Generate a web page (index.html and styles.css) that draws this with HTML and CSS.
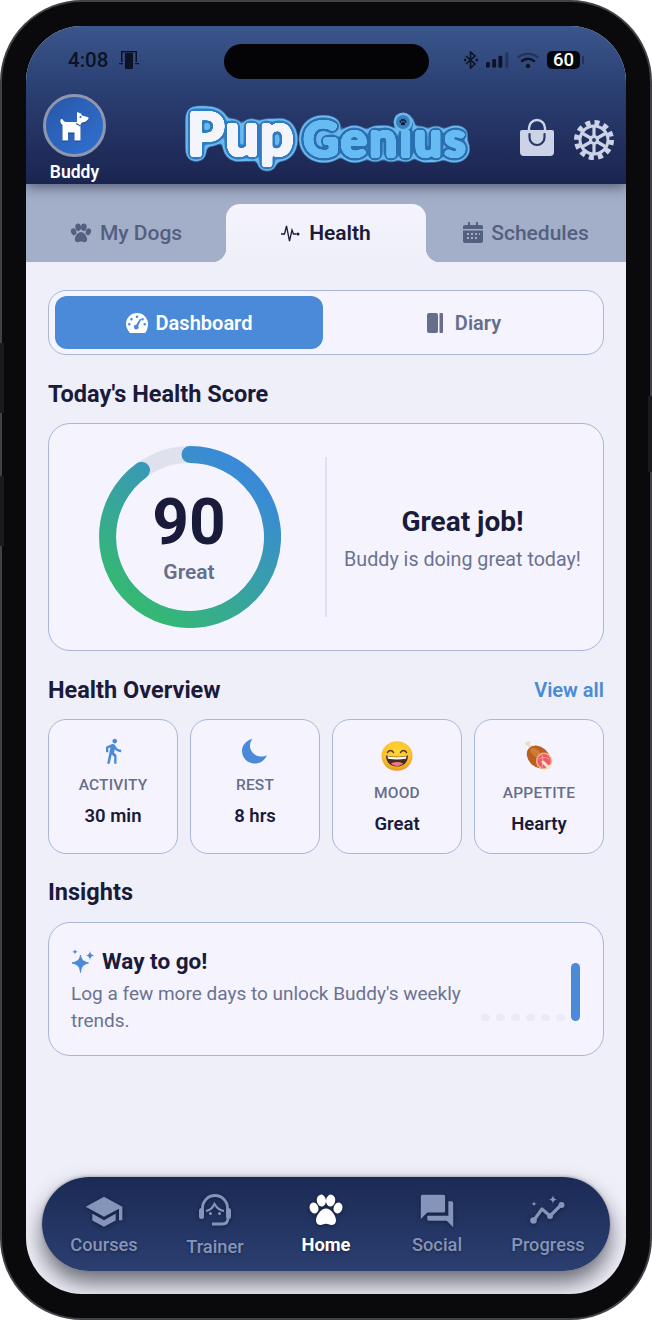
FILE: index.html
```html
<!DOCTYPE html>
<html lang="en">
<head>
  <meta charset="UTF-8" />
  <meta name="viewport" content="width=device-width, initial-scale=1.0" />
  <title>Pup Genius - Health</title>
  <link rel="stylesheet" href="styles.css">
</head>
<body>
  <svg class="defs" width="0" height="0">
    <defs>
      <symbol id="paw" viewBox="0 0 36 32">
        <ellipse cx="6" cy="14" rx="4.400" ry="5.600" transform="rotate(-18 6 14)" />
        <ellipse cx="13.400" cy="6.600" rx="4.600" ry="6" transform="rotate(-8 13.400 6.600)" />
        <ellipse cx="22.600" cy="6.600" rx="4.600" ry="6" transform="rotate(8 22.600 6.600)" />
        <ellipse cx="30" cy="14" rx="4.400" ry="5.600" transform="rotate(18 30 14)" />
        <path d="M18 14.500c-4.500 0-10 6.500-10 12 0 3 2.200 4.500 4.600 4.500 2.200 0 3.400-1.200 5.400-1.200s3.200 1.200 5.400 1.200c2.400 0 4.600-1.500 4.600-4.500 0-5.500-5.500-12-10-12z" />
      </symbol>
      <linearGradient id="ring" gradientUnits="userSpaceOnUse" x1="165" y1="15" x2="45" y2="165">
        <stop offset="0" stop-color="#3a84e4" />
        <stop offset="1" stop-color="#35b873" />
      </linearGradient>
      <radialGradient id="face" cx="50%" cy="35%" r="65%">
        <stop offset="0" stop-color="#fdd835" />
        <stop offset="0.7" stop-color="#fbc02d" />
        <stop offset="1" stop-color="#e8951c" />
      </radialGradient>
      <filter id="logo-pup" x="-20%" y="-30%" width="140%" height="160%" color-interpolation-filters="sRGB">
        <feGaussianBlur in="SourceAlpha" stdDeviation="1.200" />
        <feComponentTransfer result="a1"><feFuncA type="linear" slope="10" intercept="-1" /></feComponentTransfer>
        <feGaussianBlur in="SourceAlpha" stdDeviation="2.500" />
        <feComponentTransfer result="a2"><feFuncA type="linear" slope="20" intercept="-1" /></feComponentTransfer>
        <feGaussianBlur in="SourceAlpha" stdDeviation="4" />
        <feComponentTransfer result="a3"><feFuncA type="linear" slope="20" intercept="-1" /></feComponentTransfer>
        <feFlood flood-color="#f4f4fd" /><feComposite in2="a1" operator="in" result="c1" />
        <feFlood flood-color="#2f7cc2" /><feComposite in2="a2" operator="in" result="c2" />
        <feFlood flood-color="#69b9ee" /><feComposite in2="a3" operator="in" result="c3" />
        <feMerge><feMergeNode in="c3" /><feMergeNode in="c2" /><feMergeNode in="c1" /></feMerge>
      </filter>
      <filter id="logo-genius" x="-20%" y="-30%" width="140%" height="160%" color-interpolation-filters="sRGB">
        <feGaussianBlur in="SourceAlpha" stdDeviation="1.100" />
        <feComponentTransfer result="a1"><feFuncA type="linear" slope="10" intercept="-1" /></feComponentTransfer>
        <feGaussianBlur in="SourceAlpha" stdDeviation="2.500" />
        <feComponentTransfer result="a2"><feFuncA type="linear" slope="20" intercept="-1" /></feComponentTransfer>
        <feGaussianBlur in="SourceAlpha" stdDeviation="4" />
        <feComponentTransfer result="a3"><feFuncA type="linear" slope="20" intercept="-1" /></feComponentTransfer>
        <feFlood flood-color="#66bcf2" /><feComposite in2="a1" operator="in" result="c1" />
        <feFlood flood-color="#2a6fb2" /><feComposite in2="a2" operator="in" result="c2" />
        <feFlood flood-color="#69b9ee" /><feComposite in2="a3" operator="in" result="c3" />
        <feMerge><feMergeNode in="c3" /><feMergeNode in="c2" /><feMergeNode in="c1" /></feMerge>
      </filter>
    </defs>
  </svg>

  <div class="phone">
    <span class="side-btn side-btn-a"></span>
    <span class="side-btn side-btn-b"></span>
    <span class="side-btn side-btn-c"></span>
    <div class="screen">
      <span class="notch"></span>

      <header class="top">
        <div class="status">
          <span class="time">4:08</span>
          <svg class="mirror" width="20" height="20" viewBox="0 0 20 20">
            <path d="M2 1h16v11h-1.500V2.500h-13V12H2z" />
            <rect x="6" y="3" width="8" height="16" rx="1.200" />
            <path d="M0 13h4v1.200H0zM16 13h4v1.200h-4z" />
          </svg>
          <span class="status-right">
            <svg width="14" height="18" viewBox="0 0 14 18" fill="none" stroke="#0d1226" stroke-width="1.600">
              <path d="M2 5l9 8-4.500 4V1l4.500 4-9 8" />
              <circle cx="1" cy="9" r=".6" />
              <circle cx="13" cy="9" r=".6" />
            </svg>
            <svg width="23" height="16" viewBox="0 0 24 16">
              <rect x="0" y="10" width="4" height="6" rx="1.500" fill="#0d1226" />
              <rect x="6.500" y="7" width="4" height="9" rx="1.500" fill="#0d1226" />
              <rect x="13" y="3.500" width="4" height="12.500" rx="1.500" fill="#0d1226" />
              <rect x="20" y="0" width="3.500" height="16" rx="1.500" fill="#0d1226" opacity=".35" />
            </svg>
            <svg width="22" height="16" viewBox="0 0 22 16" fill="none" stroke="#0d1226" stroke-linecap="round">
              <path d="M1.500 5.200C7 .6 15 .6 20.500 5.200" stroke-width="2" opacity=".45" />
              <path d="M5 9C8.500 6 13.500 6 17 9" stroke-width="2.400" />
              <circle cx="11" cy="14" r="2.200" fill="#0d1226" stroke="none" />
            </svg>
            <span class="battery"><b>60</b></span>
          </span>
        </div>

        <div class="app-row">
          <div class="avatar-col">
            <div class="avatar">
              <svg class="dog" width="30" height="30" viewBox="0 0 30 30" fill="#fff">
                <path d="M17 1l4 1.500 1 2 5.500 1.500c1.200.4 1.500 1.500.5 2.500-1.500 1.800-3.500 3-6 3l-1.500 2v16h-6v-8H8v8H2.500V14C1 13 0 11.500.5 9c.2-1.200 2-1.200 2.500 0 .6 1.500 2 2 4 2h10z" />
                <circle cx="20.500" cy="6" r="1" fill="#2a5fb5" />
                <path d="M16 12.500l4.500 2.500" stroke="#2a5fb5" stroke-width="1.200" />
              </svg>
            </div>
            <span class="dog-name">Buddy</span>
          </div>

          <svg class="logo" width="292" height="84" viewBox="0 -6 292 84">
            <text class="logo-text logo-pup" x="4" y="56" filter="url(#logo-pup)">Pup</text>
            <text class="logo-text logo-genius" x="120" y="57" filter="url(#logo-genius)">Genius</text>
            <circle cx="220" cy="22" r="9.500" fill="#69b9ee" />
            <circle cx="220" cy="22" r="7" fill="#3b7fbb" />
            <use href="#paw" x="216" y="18.500" width="8" height="7" fill="#0f1c3c" />
          </svg>

          <svg class="bag" width="36" height="40" viewBox="0 0 36 40">
            <path d="M10 14V10a8 8 0 0 1 16 0v4" fill="none" stroke="#cdd3e6" stroke-width="2.400" />
            <path d="M3 12h30a2 2 0 0 1 2 2v20a4 4 0 0 1-4 4H5a4 4 0 0 1-4-4V14a2 2 0 0 1 2-2z" fill="#cdd3e6" />
            <path d="M10.500 16v3.500a7.500 7.500 0 0 0 15 0V16" fill="none" stroke="#2a3a68" stroke-width="2.200" stroke-linecap="round" />
          </svg>

          <svg class="gear" width="40" height="40" viewBox="-20 -20 40 40" fill="none" stroke="#cdd3e6">
            <circle r="17.500" stroke-width="5" stroke-dasharray="5 4.160" />
            <circle r="14" stroke-width="3" />
            <path d="M0-13V13M-11.300-6.500L11.300 6.500M-11.300 6.500L11.300-6.500" stroke-width="3.200" />
            <circle r="3.500" stroke-width="3.200" fill="#26396c" />
          </svg>
        </div>
      </header>

      <nav class="tabs">
        <div class="tab">
          <svg width="22" height="20"><use href="#paw" width="22" height="20" /></svg>
          My Dogs
        </div>
        <div class="tab tab-active">
          <svg width="20" height="20" viewBox="0 0 20 20" fill="none" stroke="#1a1a3a" stroke-width="1.300">
            <path d="M0 11h3.500l2-8 3 15 2.500-11 1.500 4h3" />
            <circle cx="17" cy="11" r="1.500" fill="#1a1a3a" stroke="none" />
          </svg>
          Health
        </div>
        <div class="tab">
          <svg width="20" height="21" viewBox="0 0 20 21">
            <path d="M2 3h3V0h2v3h6V0h2v3h3a2 2 0 0 1 2 2v2H0V5a2 2 0 0 1 2-2zM0 8.500h20V19a2 2 0 0 1-2 2H2a2 2 0 0 1-2-2z" />
            <path d="M4 11h2v2H4zM8 11h2v2H8zM12 11h2v2h-2zM16 11h1v2h-1zM4 15h2v2H4zM8 15h2v2H8zM12 15h2v2h-2z" fill="#a3aec8" />
          </svg>
          Schedules
        </div>
      </nav>

      <main class="content">
        <div class="segment">
          <div class="seg-btn seg-active">
            <svg width="22" height="20" viewBox="0 0 22 20">
              <path fill-rule="evenodd" d="M11 0a11 11 0 0 1 11 11c0 3.500-1 6.500-2.500 8.500-.4.400-.8.500-1.200.5H4.700c-.4 0-.8-.1-1.200-.5C2 17.500 0 14.500 0 11A11 11 0 0 1 11 0zm0 2.500a1.300 1.300 0 1 0 0 2.600 1.300 1.300 0 0 0 0-2.600zM5.500 5a1.300 1.300 0 1 0 0 2.600 1.300 1.300 0 0 0 0-2.600zm11 0a1.300 1.300 0 1 0 0 2.600 1.300 1.300 0 0 0 0-2.600zM3.300 10a1.300 1.300 0 1 0 0 2.600 1.300 1.300 0 0 0 0-2.600zm15.400 0a1.300 1.300 0 1 0 0 2.600 1.300 1.300 0 0 0 0-2.600zM14 5.800l-3.800 6a2.300 2.300 0 1 0 2 1.100L15.300 6.500z" />
            </svg>
            Dashboard
          </div>
          <div class="seg-btn">
            <svg width="16" height="20" viewBox="0 0 16 20">
              <rect x="0" y="0" width="11" height="20" rx="2" />
              <rect x="12.500" y="0" width="3.500" height="20" rx="1" />
            </svg>
            Diary
          </div>
        </div>

        <h2 class="sec-title">Today's Health Score</h2>
        <section class="score-card">
          <div class="ring-col">
            <svg class="ring" width="182" height="182" viewBox="0 0 182 182" fill="none" stroke-width="17">
              <circle cx="91" cy="91" r="82.500" stroke="#dfe1ec" />
              <path d="M91 8.500A82.500 82.500 0 1 1 42.500 24.300" stroke="url(#ring)" stroke-linecap="round" />
            </svg>
            <div class="ring-text">
              <span class="score">90</span>
              <span class="score-label">Great</span>
            </div>
          </div>
          <div class="score-msg">
            <h3>Great job!</h3>
            <p>Buddy is doing great today!</p>
          </div>
        </section>

        <div class="sec-row">
          <h2 class="sec-title">Health Overview</h2>
          <a class="view-all">View all</a>
        </div>
        <section class="stats">
          <div class="stat">
            <svg class="stat-icon" width="28" height="28" viewBox="0 0 24 24">
              <path d="M13.500 5.500c1.100 0 2-.9 2-2s-.9-2-2-2-2 .9-2 2 .9 2 2 2zM9.800 8.900L7 23h2.100l1.800-8 2.100 2v6h2v-7.500l-2.100-2 .6-3C14.800 12 16.800 13 19 13v-2c-1.900 0-3.500-1-4.300-2.400l-1-1.600c-.4-.6-1-1-1.700-1-.3 0-.5.1-.8.1L6 8.300V13h2V9.600l1.800-.7" />
            </svg>
            <span class="stat-label">ACTIVITY</span>
            <span class="stat-value">30 min</span>
          </div>
          <div class="stat">
            <svg class="stat-icon" width="26" height="26" viewBox="0 0 26 26">
              <path d="M10.500 1C4.500 2 0 7 0 13c0 7 5.800 12.500 12.800 12.500 5.500 0 10.300-3.500 12-8.300-1.800 1-4 1.500-6.300 1.300C11.500 18 7.500 12 8 7c.2-2.300 1.100-4.500 2.500-6z" />
            </svg>
            <span class="stat-label">REST</span>
            <span class="stat-value">8 hrs</span>
          </div>
          <div class="stat stat-emoji">
            <svg width="32" height="30" viewBox="0 0 32 30">
              <ellipse cx="16" cy="15" rx="15.500" ry="14.700" fill="url(#face)" />
              <path d="M6.500 11.500c1-2.800 5-2.800 6 0M19.500 11.500c1-2.800 5-2.800 6 0" fill="none" stroke="#54371c" stroke-width="1.500" stroke-linecap="round" />
              <path d="M5 14.500c7 1.800 15 1.800 22 0 0 7-4.500 11-11 11s-11-4-11-11z" fill="#4b2b17" />
              <path d="M6.500 15.300c6 1.200 13 1.200 19 0l-.5 2.500c-5.500 1-12.500 1-18 0z" fill="#fff" />
              <path d="M10 22.500c3-2 9-2 12 0-1.500 1.600-3.500 2.400-6 2.400s-4.500-.8-6-2.400z" fill="#f0749a" />
            </svg>
            <span class="stat-label">MOOD</span>
            <span class="stat-value">Great</span>
          </div>
          <div class="stat stat-emoji">
            <svg width="30" height="30" viewBox="0 0 30 30">
              <path d="M9 8L4 3.500" stroke="#f0dcc4" stroke-width="3" stroke-linecap="round" />
              <circle cx="3" cy="2.500" r="2" fill="#f0dcc4" />
              <circle cx="5" cy="1.800" r="1.700" fill="#f0dcc4" />
              <ellipse cx="14.500" cy="16" rx="13" ry="10" transform="rotate(42 14.500 16)" fill="#b8601f" />
              <ellipse cx="12" cy="12" rx="7" ry="3.500" transform="rotate(40 12 12)" fill="#d07c36" />
              <ellipse cx="20" cy="20" rx="8" ry="8.500" fill="#f3b283" />
              <ellipse cx="20" cy="20" rx="6.600" ry="7" fill="#ec5a68" />
              <path d="M15 18c3-2 7-2 10 0M18 14c1 4 1 9 0 12" stroke="#f8a0a0" stroke-width="1" fill="none" />
              <path d="M19 21l5 5" stroke="#f2e3cf" stroke-width="3" stroke-linecap="round" />
              <circle cx="25.500" cy="25.500" r="1.800" fill="#f2e3cf" />
              <circle cx="24" cy="27" r="1.800" fill="#f2e3cf" />
            </svg>
            <span class="stat-label">APPETITE</span>
            <span class="stat-value">Hearty</span>
          </div>
        </section>

        <h2 class="sec-title sec-insights">Insights</h2>
        <section class="insight">
          <div class="insight-body">
            <div class="insight-head">
              <svg width="24" height="24" viewBox="0 0 24 24" fill="#4a8ad9">
                <path d="M9.500 6c.6 4.500 2.500 6.500 8 8-5.500 1.500-7.400 3.500-8 9.500-.6-6-2.500-8-8.500-9.500 6-1.500 7.900-3.500 8.500-8z" stroke="#4a8ad9" stroke-width="1" stroke-linejoin="round" />
                <path d="M19 2c.4 2.800 1.400 3.800 4.500 4.500C20.400 7.200 19.400 8.200 19 11c-.4-2.800-1.400-3.800-4-4.500 2.600-.7 3.600-1.700 4-4.500z" />
                <path d="M4 0c.2 1.700.8 2.300 2.800 2.800C4.800 3.300 4.200 3.900 4 5.600c-.2-1.700-.8-2.300-2.800-2.800C3.200 2.300 3.800 1.700 4 0z" />
              </svg>
              <h3>Way to go!</h3>
            </div>
            <p>Log a few more days to unlock Buddy's weekly trends.</p>
          </div>
          <div class="mini-chart">
            <span class="dot"></span>
            <span class="dot"></span>
            <span class="dot"></span>
            <span class="dot"></span>
            <span class="dot"></span>
            <span class="dot"></span>
            <span class="bar"></span>
          </div>
        </section>
      </main>

      <footer class="bottom-nav">
        <div class="nav-item">
          <svg width="40" height="32" viewBox="0 2 24 19">
            <path d="M5 13.180v4L12 21l7-3.820v-4L12 17l-7-3.820zM12 3 1 9l11 6 9-4.910V17h2V9L12 3z" />
          </svg>
          <span>Courses</span>
        </div>
        <div class="nav-item nav-trainer">
          <svg width="34" height="32" viewBox="0 0 34 32" fill="none" stroke="#8494ba" stroke-width="2.800">
            <path d="M4.500 16v-3a12.500 12.500 0 0 1 25 0v3" />
            <path d="M8 16c3.500-.5 6.500-3 8.500-7 2 3.500 5 6.500 9.500 7" stroke-width="2.200" />
            <rect x="1" y="13" width="5" height="11" rx="2.500" fill="#8494ba" stroke="none" />
            <rect x="28" y="13" width="5" height="11" rx="2.500" fill="#8494ba" stroke="none" />
            <path d="M30 23c0 4-2 6-6 6H14" />
            <circle cx="12.500" cy="18.500" r="1.500" fill="#8494ba" stroke="none" />
            <circle cx="21.500" cy="18.500" r="1.500" fill="#8494ba" stroke="none" />
          </svg>
          <span>Trainer</span>
        </div>
        <div class="nav-item nav-active">
          <svg width="36" height="32"><use href="#paw" width="36" height="32" /></svg>
          <span>Home</span>
        </div>
        <div class="nav-item">
          <svg width="36" height="36" viewBox="1.500 1.500 21 21">
            <path d="M21 6h-2v9H6v2c0 .55.45 1 1 1h11l4 4V7c0-.55-.45-1-1-1zm-4 6V3c0-.55-.45-1-1-1H3c-.55 0-1 .45-1 1v14l4-4h10c.55 0 1-.45 1-1z" />
          </svg>
          <span>Social</span>
        </div>
        <div class="nav-item">
          <svg width="36" height="32" viewBox="0 0 36 32" fill="#8494ba">
            <path d="M4 25l8-11 8 7 11-11" fill="none" stroke="#8494ba" stroke-width="3.200" stroke-linecap="round" stroke-linejoin="round" />
            <circle cx="3.500" cy="25.500" r="3.300" />
            <circle cx="20" cy="21" r="3" />
            <circle cx="31.500" cy="10" r="3" />
            <path d="M23 0c.4 3 1.200 3.800 4 4.500-2.800.7-3.600 1.500-4 4.500-.4-3-1.200-3.800-4-4.500 2.800-.7 3.600-1.500 4-4.500z" />
            <path d="M4 6c.2 1.800.7 2.300 2.800 2.800C4.700 9.300 4.200 9.800 4 11.600c-.2-1.800-.7-2.300-2.800-2.800C3.300 8.300 3.800 7.800 4 6z" />
          </svg>
          <span>Progress</span>
        </div>
      </footer>
    </div>
  </div>
</body>
</html>
```

FILE: styles.css
```css
* {
  margin: 0;
  padding: 0;
  box-sizing: border-box;
}

html {
  font-family: "Roboto", "Liberation Sans", sans-serif;
}

body {
  width: 652px;
  height: 1320px;
  background-color: #fff;
  overflow: hidden;
}

.defs {
  position: absolute;
}

/* device frame */
.phone {
  position: relative;
  width: 652px;
  height: 1320px;
  padding: 24px;
  background-color: #0a0a0c;
  border: 2px solid #3f4147;
  border-radius: 82px;
}

.side-btn {
  position: absolute;
  width: 4px;
  background-color: #1a1b1f;
}

.side-btn-a {
  left: -2px;
  top: 341px;
  height: 70px;
}

.side-btn-b {
  left: -2px;
  top: 474px;
  height: 70px;
}

.side-btn-c {
  right: -2px;
  top: 394px;
  height: 76px;
}

.screen {
  position: relative;
  display: flex;
  flex-direction: column;
  height: 1268px;
  background-color: #eeeff8;
  border-radius: 56px;
  overflow: hidden;
}

.notch {
  position: absolute;
  left: 198px;
  top: 18px;
  width: 205px;
  height: 35px;
  background-color: #040406;
  border-radius: 18px;
  z-index: 5;
}

/* header */
.top {
  position: relative;
  height: 158px;
  flex-shrink: 0;
  background: linear-gradient(180deg, #3b568c 0%, #2a3f72 40%, #1b2450 100%);
  box-shadow: 0 3px 12px rgba(20, 24, 50, 0.55);
  z-index: 2;
}

.status {
  display: flex;
  align-items: center;
  height: 68px;
  padding: 22px 0 22px 42px;
  color: #0d1226;
}

.time {
  font-size: 20.500px;
  font-weight: 500;
}

.mirror {
  margin-left: 11px;
  fill: #0d1226;
}

.status-right {
  display: flex;
  align-items: center;
  gap: 8px;
  margin-left: auto;
  margin-right: 46px;
}

.battery {
  position: relative;
  display: flex;
  align-items: center;
  justify-content: center;
  width: 33px;
  height: 18px;
  background-color: #05070f;
  border-radius: 5px;
  color: #fff;
  font-size: 18.500px;
}

.battery b {
  font-weight: 500;
}

.battery::after {
  content: "";
  position: absolute;
  right: -4px;
  top: 5px;
  width: 2px;
  height: 8px;
  border-radius: 1px;
  background-color: #0d1226;
  opacity: 0.45;
}

.app-row {
  display: flex;
  align-items: flex-start;
  padding-left: 17px;
}

.avatar-col {
  display: flex;
  flex-direction: column;
  align-items: center;
  width: 63px;
}

.avatar {
  display: flex;
  align-items: center;
  justify-content: center;
  width: 63px;
  height: 63px;
  border: 3px solid #8e97ad;
  border-radius: 50%;
  background: linear-gradient(135deg, #2858aa, #3070d0);
}

.dog {
  filter: drop-shadow(0 1px 0 rgba(15, 40, 90, 0.6));
}

.dog-name {
  margin-top: 5px;
  font-size: 17.500px;
  font-weight: 600;
  line-height: 20px;
  color: #fff;
  white-space: nowrap;
}

.logo {
  margin-left: 77px;
  flex-shrink: 0;
}

.logo-text {
  font-family: "Lato", sans-serif;
  font-weight: 900;
}

.logo-pup {
  font-size: 60px;
  letter-spacing: 0.5px;
  fill: #f4f4fd;
}

.logo-genius {
  font-size: 49.500px;
  letter-spacing: 2px;
  fill: #66bcf2;
}

.bag {
  margin-left: 44px;
  margin-top: 24px;
  flex-shrink: 0;
}

.gear {
  margin-left: 19px;
  margin-top: 26px;
  flex-shrink: 0;
}

/* tabs */
.tabs {
  display: flex;
  height: 78px;
  flex-shrink: 0;
  padding-top: 20px;
  background-color: #a3aec8;
}

.tab {
  position: relative;
  flex: 1;
  display: flex;
  align-items: center;
  justify-content: center;
  gap: 8px;
  height: 58px;
  padding-bottom: 1px;
  font-size: 21px;
  font-weight: 500;
  color: #555f80;
  fill: #555f80;
}

.tab-active {
  background: linear-gradient(180deg, #f5f4fe, #eeeff8);
  border-radius: 14px 14px 0 0;
  font-weight: 600;
  color: #1a1a3a;
}

.tab-active::before,
.tab-active::after {
  content: "";
  position: absolute;
  bottom: 0;
  width: 14px;
  height: 14px;
}

.tab-active::before {
  left: -14px;
  background: radial-gradient(circle at 0 0, transparent 14px, #eeeff8 14.500px);
}

.tab-active::after {
  right: -14px;
  background: radial-gradient(circle at 100% 0, transparent 14px, #eeeff8 14.500px);
}

/* main */
.content {
  flex: 1;
  padding: 28px 22px 0;
}

.segment {
  display: flex;
  height: 65px;
  padding: 5px 6px;
  background-color: #f5f4fe;
  border: 1px solid #a9b6d8;
  border-radius: 18px;
}

.seg-btn {
  display: flex;
  align-items: center;
  justify-content: center;
  gap: 12px;
  flex: 1;
  padding-left: 8px;
  font-size: 20px;
  font-weight: 600;
  color: #666e8c;
  fill: #666e8c;
  border-radius: 12px;
}

.seg-active {
  flex: 0 0 268px;
  gap: 8px;
  padding-left: 0;
  background-color: #4a8ad9;
  color: #fff;
  fill: #fff;
}

.sec-title {
  margin-top: 26px;
  margin-bottom: 16px;
  font-size: 23.500px;
  font-weight: 700;
  line-height: 27px;
  color: #1a1a3a;
  height: 26px;
}

.sec-insights {
  margin-top: 25px;
  margin-bottom: 17px;
}

.sec-row {
  display: flex;
  justify-content: space-between;
  align-items: flex-start;
}

.view-all {
  margin-top: 26px;
  font-size: 20px;
  font-weight: 600;
  line-height: 26px;
  color: #4a8ad9;
}

.score-card {
  display: flex;
  height: 228px;
  background-color: #f5f4fe;
  border: 1px solid #a9b6d8;
  border-radius: 22px;
}

.ring-col {
  position: relative;
  display: flex;
  align-items: center;
  justify-content: center;
  width: 278px;
  margin: 33px 0;
  padding: 2px 0 0 4px;
  border-right: 2px solid #dfe1ec;
}

.ring {
  position: absolute;
  top: -11px;
  left: 50px;
}

.ring-text {
  display: flex;
  flex-direction: column;
  align-items: center;
}

.score {
  font-size: 64px;
  font-weight: 700;
  line-height: 64px;
  color: #1a1a3a;
}

.score-label {
  margin-top: 4px;
  font-size: 21px;
  font-weight: 600;
  line-height: 26px;
  color: #666e8c;
}

.score-msg {
  flex: 1;
  display: flex;
  flex-direction: column;
  justify-content: center;
  align-items: center;
  padding: 4px 5px 0 0;
}

.score-msg h3 {
  font-size: 28px;
  font-weight: 700;
  line-height: 34px;
  color: #1a1a3a;
}

.score-msg p {
  margin-top: 8px;
  font-size: 19.700px;
  line-height: 26px;
  color: #6b7290;
}

.stats {
  display: flex;
  justify-content: space-between;
}

.stat {
  display: flex;
  flex-direction: column;
  align-items: center;
  width: 130px;
  height: 135px;
  padding-top: 17px;
  background-color: #f5f4fe;
  border: 1px solid #a9b6d8;
  border-radius: 18px;
}

.stat-icon {
  fill: #4a8ad9;
  height: 28px;
}

.stat-label {
  margin-top: 11px;
  font-size: 15.500px;
  font-weight: 500;
  line-height: 18px;
  letter-spacing: 0.2px;
  color: #666e8c;
}

.stat-value {
  margin-top: 11px;
  font-size: 18.500px;
  font-weight: 600;
  line-height: 22px;
  color: #1a1a3a;
}

.stat-emoji {
  padding-top: 21px;
}

.stat-emoji .stat-label {
  margin-top: 13px;
}

.insight {
  display: flex;
  justify-content: space-between;
  height: 134px;
  padding: 24px 23px 0 22px;
  background-color: #f5f4fe;
  border: 1px solid #a9b6d8;
  border-radius: 22px;
}

.insight-body {
  width: 395px;
}

.insight-head {
  display: flex;
  align-items: center;
  gap: 7px;
  height: 28px;
}

.insight-head h3 {
  font-size: 22.500px;
  font-weight: 700;
  color: #1a1a3a;
}

.insight-body p {
  margin-top: 5px;
  font-size: 19px;
  line-height: 27px;
  color: #6b7290;
}

.mini-chart {
  display: flex;
  align-items: flex-end;
  gap: 6px;
  margin-top: 16px;
  height: 58px;
}

.dot {
  width: 9px;
  height: 7px;
  border-radius: 4px;
  background-color: #eaebf5;
}

.bar {
  width: 9px;
  height: 58px;
  border-radius: 5px;
  background-color: #4a8ad9;
}

/* bottom nav */
.bottom-nav {
  position: absolute;
  left: 16px;
  right: 16px;
  bottom: 23px;
  display: flex;
  justify-content: center;
  height: 94px;
  padding-top: 17px;
  background: linear-gradient(180deg, #1b2a55, #2b3f70);
  border-radius: 47px;
  box-shadow: 0 12px 22px rgba(20, 20, 30, 0.6), 0 -1px 3px rgba(20, 20, 30, 0.25);
}

.nav-item {
  display: flex;
  flex-direction: column;
  align-items: center;
  width: 111px;
  font-size: 18.300px;
  font-weight: 500;
  color: #8494ba;
  fill: #8494ba;
  text-shadow: 0 1px 3px rgba(0, 0, 0, 0.4);
}

.nav-item svg {
  height: 34px;
  filter: drop-shadow(0 1px 2px rgba(0, 0, 0, 0.4));
}

.nav-item span {
  margin-top: 5px;
  line-height: 24px;
}

.nav-trainer span {
  margin-top: 7px;
}

.nav-active {
  font-weight: 700;
  color: #fff;
  fill: #fff;
}
```
